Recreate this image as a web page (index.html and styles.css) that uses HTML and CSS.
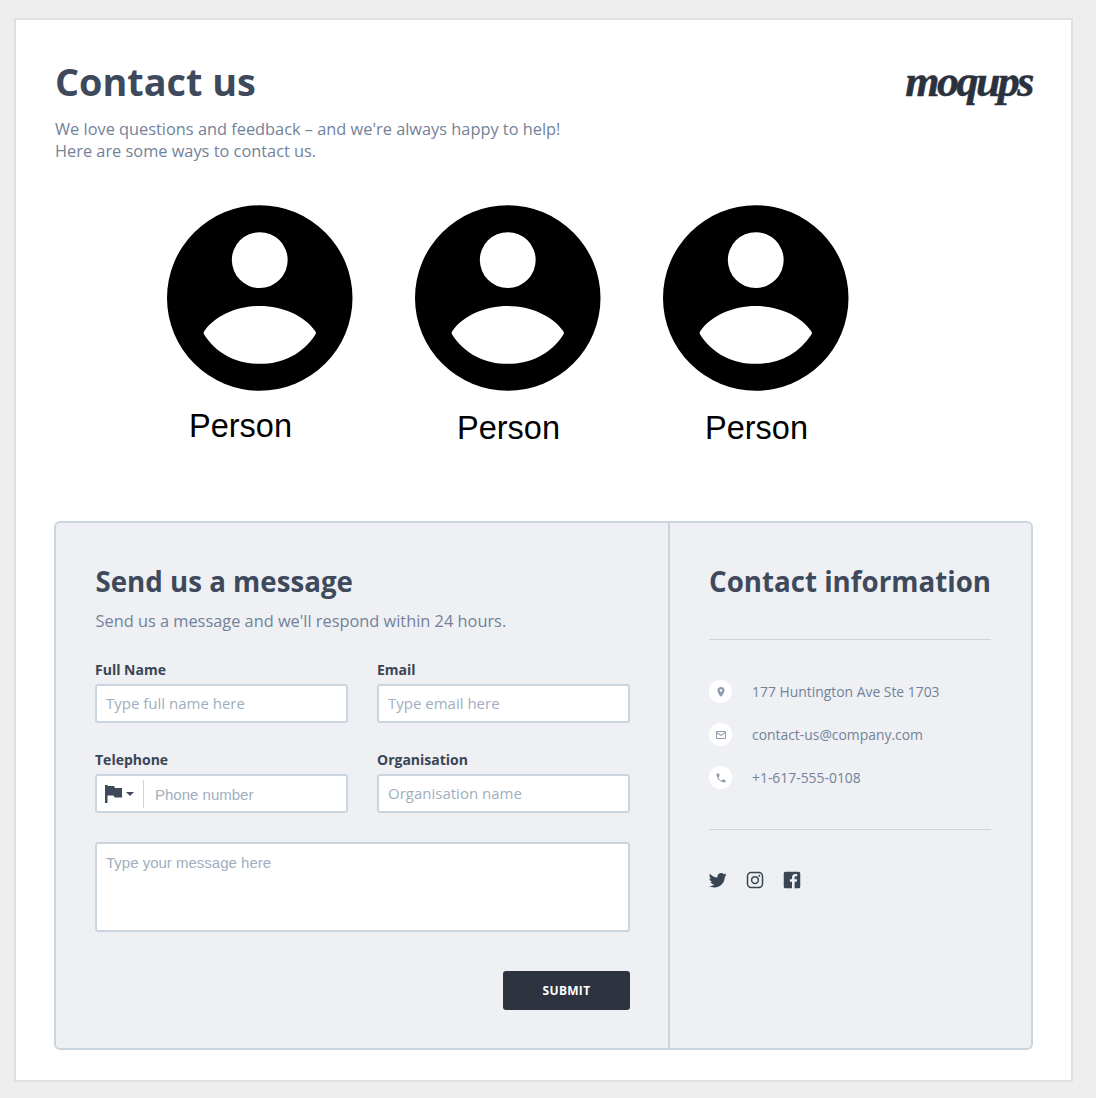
FILE: index.html
```html
<!DOCTYPE html>
<html lang="en">
<head>
    <meta charset="UTF-8">
    <title>Contact us</title>
    <link rel="stylesheet" href="styles.css">
</head>
<body>
    <div class="page">
        <!-- header -->
        <div class="top">
            <div>
                <h1>Contact us</h1>
                <p class="intro">We love questions and feedback – and we're always happy to help!<br>Here are some ways to contact us.</p>
            </div>
            <div class="logo">moqups</div>
        </div>

        <!-- people -->
        <div class="people">
            <div class="person">
                <svg class="avatar" viewBox="0 0 186 186"><path fill-rule="evenodd" d="M93 0a93 93 0 1 1 0 186a93 93 0 1 1 0-186zM93 27a28 28 0 1 0 0 56a28 28 0 1 0 0-56zM37.500 126C48 111 70 101 93 101C116 101 138 111 148.500 126C149.500 127.500 149.500 128.500 148.500 130C136 149 116 159 93 159C70 159 50 149 37.500 130C36.500 128.500 36.500 127.500 37.500 126z"/></svg>
                <div class="person-name first">Person</div>
            </div>
            <div class="person">
                <svg class="avatar" viewBox="0 0 186 186"><path fill-rule="evenodd" d="M93 0a93 93 0 1 1 0 186a93 93 0 1 1 0-186zM93 27a28 28 0 1 0 0 56a28 28 0 1 0 0-56zM37.500 126C48 111 70 101 93 101C116 101 138 111 148.500 126C149.500 127.500 149.500 128.500 148.500 130C136 149 116 159 93 159C70 159 50 149 37.500 130C36.500 128.500 36.500 127.500 37.500 126z"/></svg>
                <div class="person-name">Person</div>
            </div>
            <div class="person">
                <svg class="avatar" viewBox="0 0 186 186"><path fill-rule="evenodd" d="M93 0a93 93 0 1 1 0 186a93 93 0 1 1 0-186zM93 27a28 28 0 1 0 0 56a28 28 0 1 0 0-56zM37.500 126C48 111 70 101 93 101C116 101 138 111 148.500 126C149.500 127.500 149.500 128.500 148.500 130C136 149 116 159 93 159C70 159 50 149 37.500 130C36.500 128.500 36.500 127.500 37.500 126z"/></svg>
                <div class="person-name">Person</div>
            </div>
        </div>

        <div class="panel">
            <!-- form -->
            <form class="message">
                <h2>Send us a message</h2>
                <p class="lead">Send us a message and we'll respond within 24 hours.</p>
                <div class="fields">
                    <div class="field">
                        <label for="fullname">Full Name</label>
                        <input type="text" id="fullname" placeholder="Type full name here">
                    </div>
                    <div class="field">
                        <label for="email">Email</label>
                        <input type="text" id="email" placeholder="Type email here">
                    </div>
                    <div class="field">
                        <label for="phone">Telephone</label>
                        <div class="phone">
                            <div class="flag">
                                <svg class="flag-icon" viewBox="0 0 18 18"><path d="M0 0h2.500v18H0zM2.500 1H9l1 2h7v9.500H9.500l-1-2H2.500z"/></svg>
                                <span class="caret"></span>
                            </div>
                            <input type="text" id="phone" placeholder="Phone number">
                        </div>
                    </div>
                    <div class="field">
                        <label for="org">Organisation</label>
                        <input type="text" id="org" placeholder="Organisation name">
                    </div>
                </div>
                <textarea placeholder="Type your message here"></textarea>
                <div class="actions">
                    <button type="button" class="submit">SUBMIT</button>
                </div>
            </form>

            <!-- contact info -->
            <div class="info">
                <h2>Contact information</h2>
                <div class="info-list">
                    <div class="info-row">
                        <span class="dot"><svg viewBox="0 0 24 24"><path d="M12 2a7 7 0 0 0-7 7c0 5.200 7 13 7 13s7-7.800 7-13a7 7 0 0 0-7-7zm0 9.500a2.500 2.500 0 1 1 0-5a2.500 2.500 0 0 1 0 5z"/></svg></span>
                        <span>177 Huntington Ave Ste 1703</span>
                    </div>
                    <div class="info-row">
                        <span class="dot"><svg viewBox="0 0 24 24"><path d="M4 4h16a2 2 0 0 1 2 2v12a2 2 0 0 1-2 2H4a2 2 0 0 1-2-2V6a2 2 0 0 1 2-2zm0 2v.6l8 5 8-5V6zm16 2.900l-8 5-8-5V18h16z"/></svg></span>
                        <span>contact-us@company.com</span>
                    </div>
                    <div class="info-row">
                        <span class="dot"><svg viewBox="0 0 24 24"><path d="M6.600 10.800c1.400 2.800 3.800 5.100 6.600 6.600l2.200-2.200c.3-.3.7-.4 1-.2 1.100.4 2.300.6 3.600.6.600 0 1 .4 1 1V20c0 .6-.4 1-1 1C10.600 21 3 13.400 3 4c0-.6.4-1 1-1h3.500c.6 0 1 .4 1 1 0 1.300.2 2.500.6 3.600.1.300 0 .7-.2 1z"/></svg></span>
                        <span>+1-617-555-0108</span>
                    </div>
                </div>
                <div class="social">
                    <svg viewBox="0 0 24 24"><path d="M23.500 4.900c-.9.400-1.800.6-2.800.8 1-.6 1.800-1.500 2.100-2.700-.9.600-2 1-3.100 1.200C18.800 3.200 17.500 2.600 16.100 2.600c-2.700 0-4.900 2.200-4.900 4.900 0 .4 0 .8.100 1.100C7.300 8.400 3.700 6.400 1.300 3.500.9 4.200.6 5.100.6 6c0 1.700.9 3.200 2.200 4.100-.8 0-1.600-.2-2.200-.6v.1c0 2.400 1.700 4.400 3.900 4.800-.4.100-.8.200-1.300.2-.3 0-.6 0-.9-.1.600 2 2.400 3.400 4.600 3.400-1.700 1.300-3.800 2.100-6.100 2.100-.4 0-.8 0-1.200-.1 2.200 1.400 4.700 2.200 7.500 2.200 9 0 14-7.500 14-14v-.6c1-.7 1.800-1.600 2.400-2.500z"/></svg>
                    <svg viewBox="0 0 24 24"><path fill-rule="evenodd" d="M7 1h10a6 6 0 0 1 6 6v10a6 6 0 0 1-6 6H7a6 6 0 0 1-6-6V7a6 6 0 0 1 6-6zm0 2a4 4 0 0 0-4 4v10a4 4 0 0 0 4 4h10a4 4 0 0 0 4-4V7a4 4 0 0 0-4-4zm5 3.500a5.500 5.500 0 1 1 0 11a5.500 5.500 0 0 1 0-11zm0 2a3.500 3.500 0 1 0 0 7a3.500 3.500 0 0 0 0-7zM17.800 4.900a1.300 1.300 0 1 1 0 2.600a1.300 1.300 0 0 1 0-2.600z"/></svg>
                    <svg viewBox="0 0 24 24"><path d="M3 1h18a2 2 0 0 1 2 2v18a2 2 0 0 1-2 2h-5.500v-8.700h2.900l.4-3.400h-3.300V8.700c0-1 .3-1.700 1.700-1.700h1.700V4c-.3 0-1.300-.1-2.500-.1-2.500 0-4.300 1.500-4.300 4.400v2.600H9.200v3.400H12V23H3a2 2 0 0 1-2-2V3a2 2 0 0 1 2-2z"/></svg>
                </div>
            </div>
        </div>
    </div>
</body>
</html>
```

FILE: styles.css
```css
html, body {
    margin: 0;
    background-color: #eeeeee;
}
body {
    padding: 18px 23px 16px 14px;
    font-family: "Open Sans", sans-serif;
    color: #3d4859;
}
h1, h2, p {
    margin: 0;
}
.page {
    height: 1060px;
    padding: 0 38px;
    background-color: #ffffff;
    border: 2px solid #e0e0e0;
}
.top {
    display: flex;
    justify-content: space-between;
    padding-top: 37px;
}
h1 {
    padding-left: 1px;
    font-size: 37.8px;
    line-height: 50px;
    font-weight: 700;
    color: #3e4a5b;
}
.intro {
    margin-top: 11px;
    padding-left: 1px;
    font-size: 16.35px;
    line-height: 22px;
    color: #738299;
}
.logo {
    margin: 0 1px 0 0;
    font-family: "Liberation Serif", serif;
    font-style: italic;
    font-weight: 700;
    font-size: 44px;
    line-height: 50px;
    letter-spacing: -2.5px;
    color: #2b323e;
    -webkit-text-stroke: 0.5px #2b323e;
}
.people {
    display: flex;
    gap: 62.5px;
    margin-top: 43px;
    padding-left: 113px;
}
.person {
    width: 185.5px;
}
.avatar {
    display: block;
    width: 185.5px;
    height: 186px;
}
.person-name {
    margin: 17px 0 0 42px;
    font-family: "Liberation Sans", sans-serif;
    font-size: 32.5px;
    line-height: 40px;
    color: #000000;
}
.person-name.first {
    margin: 15px 0 0 22px;
}
.panel {
    display: grid;
    grid-template-columns: 614px 1fr;
    margin-top: 73px;
    height: 529px;
    box-sizing: border-box;
    background-color: #eef0f4;
    border: 2px solid #cbd5e0;
    border-radius: 6px;
}
.message {
    padding: 39px 38px 0 39px;
    border-right: 2px solid #cbd5e0;
}
.lead {
    margin-top: 10px;
    font-size: 16.35px;
    line-height: 22px;
    color: #738299;
}
.message h2, .lead {
    padding-left: 0.5px;
}
h2 {
    font-size: 27.7px;
    line-height: 38px;
    font-weight: 700;
    color: #3e4a5b;
    white-space: nowrap;
}
.fields {
    display: grid;
    grid-template-columns: 253px 253px;
    column-gap: 29px;
    row-gap: 27px;
    margin-top: 28px;
}
.field label {
    display: block;
    height: 24px;
    font-size: 14px;
    line-height: 19px;
    font-weight: 700;
    color: #3a4554;
}
input, textarea {
    font-family: "Open Sans", sans-serif;
    font-size: 15px;
    color: #3a4554;
    outline: none;
}
input::placeholder, textarea::placeholder {
    color: #a0aec0;
    opacity: 1;
}
input[type="text"] {
    display: block;
    box-sizing: border-box;
    width: 100%;
    height: 39px;
    padding: 0 9px 2px;
    background-color: #ffffff;
    border: 2px solid #cbd5e0;
    border-radius: 3px;
}
.phone {
    display: flex;
    align-items: center;
    box-sizing: border-box;
    height: 39px;
    background-color: #ffffff;
    border: 2px solid #cbd5e0;
    border-radius: 3px;
}
.phone input[type="text"] {
    height: 35px;
    border: none;
    padding: 2px 10px 0 11px;
    font-family: "Liberation Sans", sans-serif;
}
.flag {
    display: flex;
    align-items: center;
    gap: 3px;
    flex: none;
    width: 47px;
    height: 28px;
    padding-left: 8px;
    box-sizing: border-box;
    border-right: 1px solid #cbd5e0;
}
.flag-icon {
    width: 18px;
    height: 18px;
    fill: #3e4a5b;
}
.caret {
    border-top: 4px solid #3e4a5b;
    border-left: 4px solid transparent;
    border-right: 4px solid transparent;
}
textarea {
    display: block;
    box-sizing: border-box;
    width: 535px;
    height: 90px;
    margin-top: 29px;
    padding: 10px 9px;
    font-family: "Liberation Sans", sans-serif;
    background-color: #ffffff;
    border: 2px solid #cbd5e0;
    border-radius: 3px;
    resize: none;
}
.actions {
    display: flex;
    justify-content: flex-end;
    margin-top: 39px;
}
.submit {
    width: 127px;
    height: 39px;
    font-family: "Open Sans", sans-serif;
    font-size: 12px;
    font-weight: 700;
    letter-spacing: 0.3px;
    color: #ffffff;
    background-color: #2d343f;
    border: none;
    border-radius: 3px;
}
.info {
    padding: 39px 41px 0 39px;
}
.info-list {
    display: flex;
    flex-direction: column;
    gap: 20px;
    margin-top: 39px;
    padding: 40px 0 40px;
    border-top: 1px solid #cfd3dc;
    border-bottom: 1px solid #cfd3dc;
}
.info-row {
    display: flex;
    align-items: center;
    gap: 20px;
    font-size: 13.9px;
    line-height: 23px;
    color: #738299;
}
.dot {
    display: flex;
    align-items: center;
    justify-content: center;
    width: 23px;
    height: 23px;
    background-color: #ffffff;
    border-radius: 50%;
}
.dot svg {
    width: 12px;
    height: 12px;
    fill: #8f9cb0;
}
.social {
    display: flex;
    gap: 19px;
    margin-top: 41px;
}
.social svg {
    width: 18px;
    height: 18px;
    fill: #3a4554;
}
```
